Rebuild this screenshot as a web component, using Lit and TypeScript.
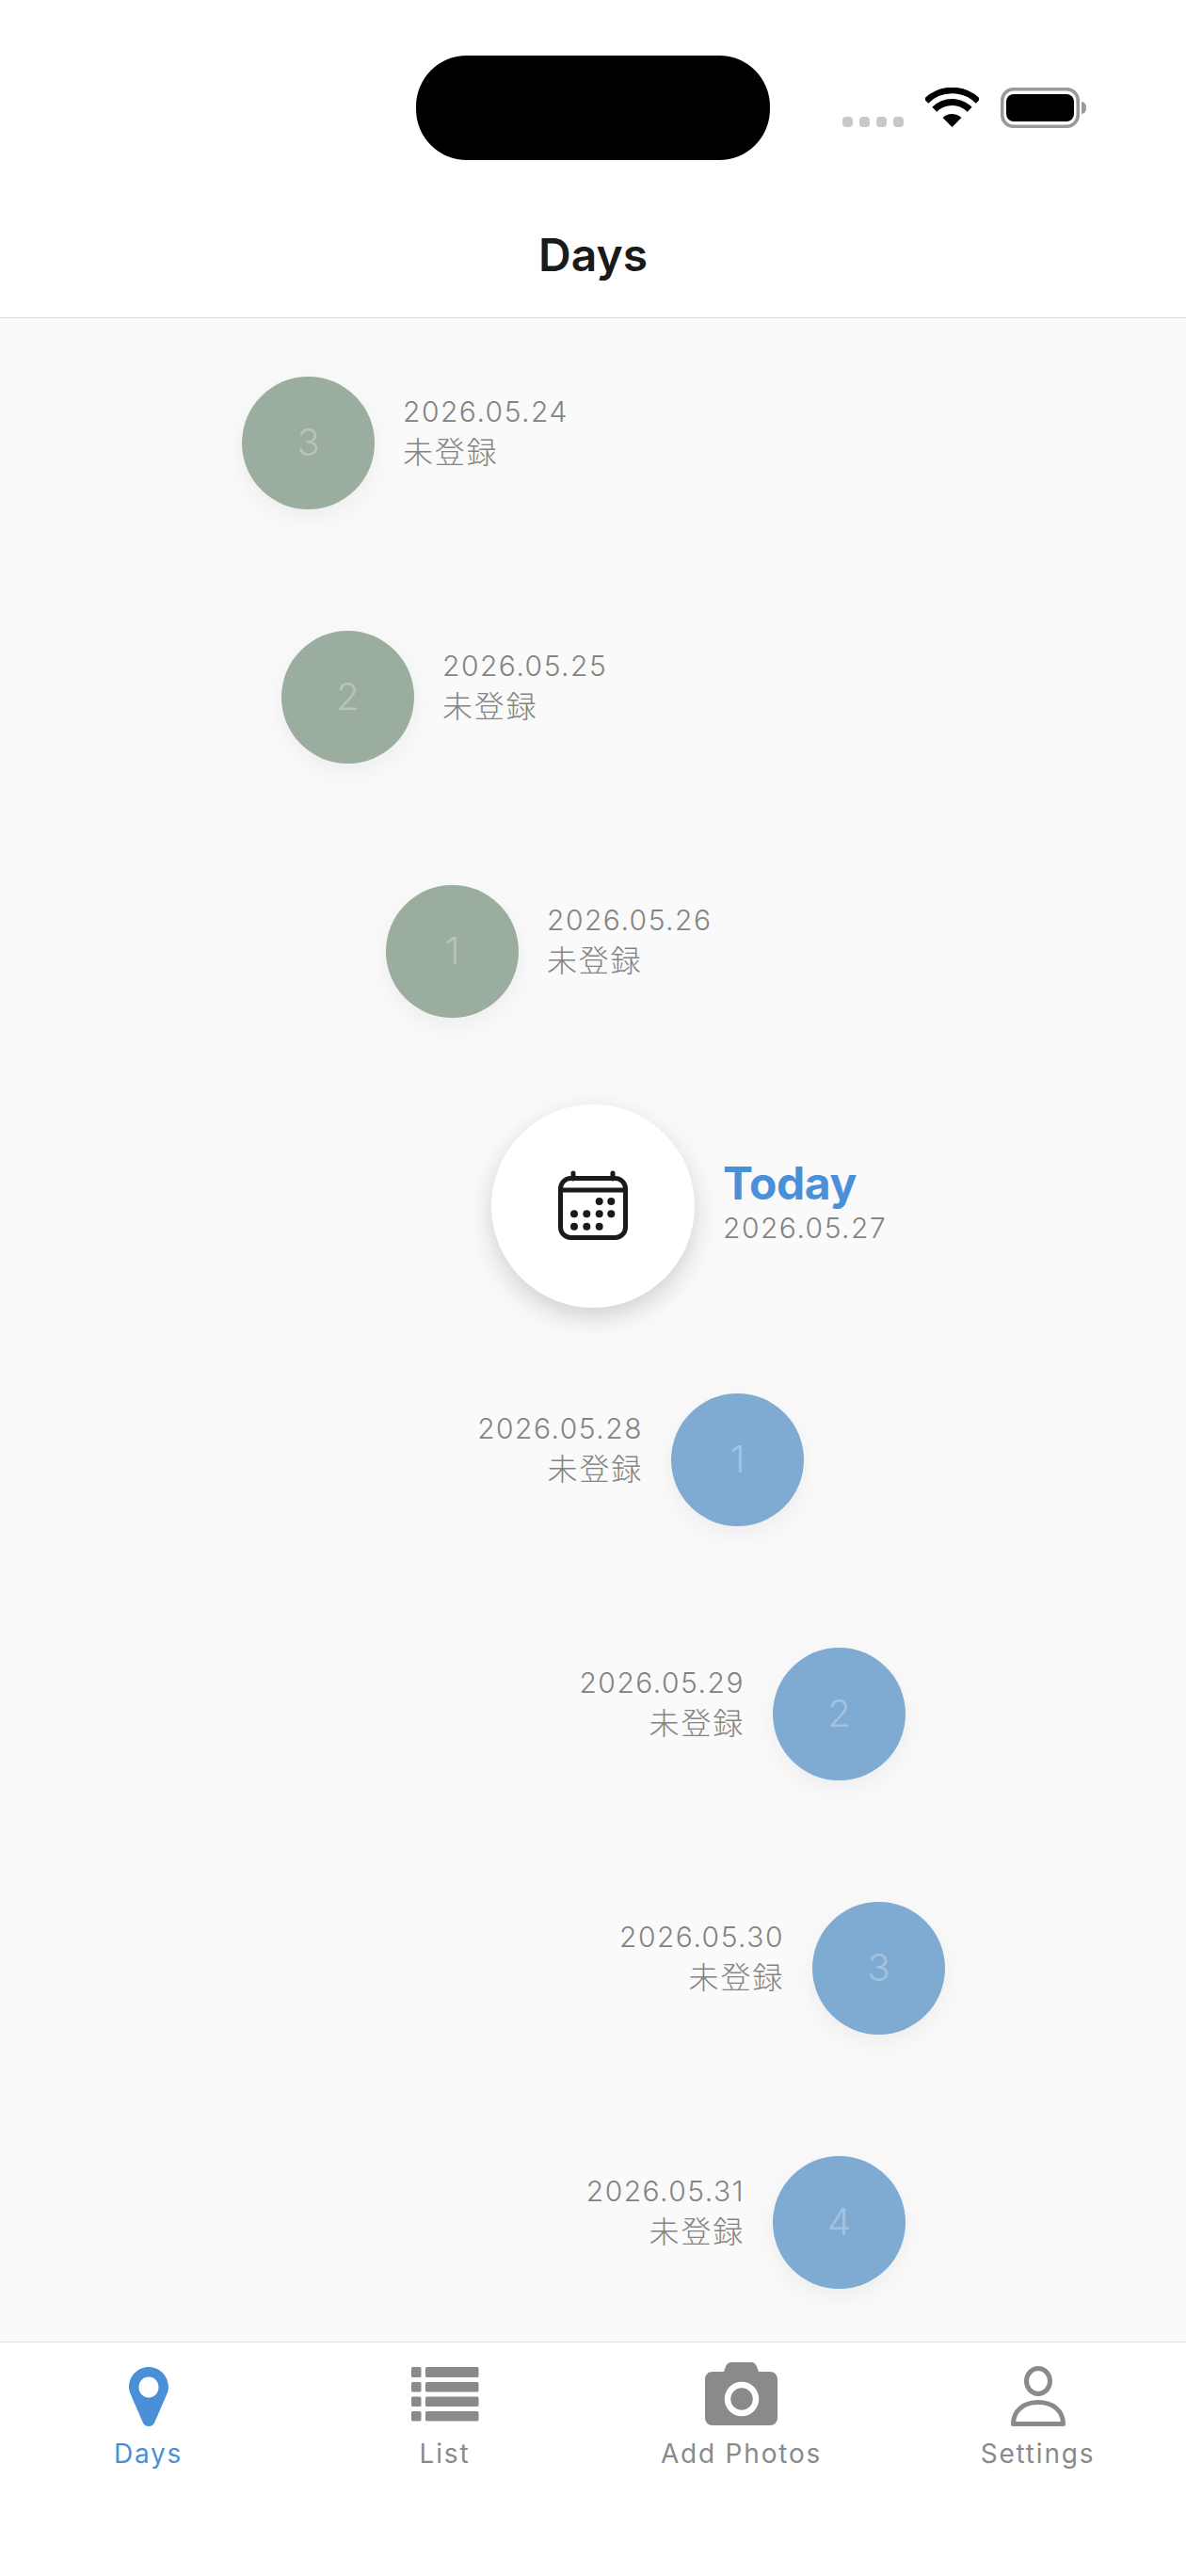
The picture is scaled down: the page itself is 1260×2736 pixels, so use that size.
import { LitElement, html, css, svg } from "lit";
import { customElement } from "lit/decorators.js";

type Day = { date: string; count: number; side: "past" | "future"; inset: number };

// inset = distance of the circle from the screen edge on its own side
const before: Day[] = [
  { date: "2026.05.24", count: 3, side: "past", inset: 257 },
  { date: "2026.05.25", count: 2, side: "past", inset: 299 },
  { date: "2026.05.26", count: 1, side: "past", inset: 410 },
];
const after: Day[] = [
  { date: "2026.05.28", count: 1, side: "future", inset: 406 },
  { date: "2026.05.29", count: 2, side: "future", inset: 298 },
  { date: "2026.05.30", count: 3, side: "future", inset: 256 },
  { date: "2026.05.31", count: 4, side: "future", inset: 298 },
];

const pinIcon = svg`<path fill-rule="evenodd" d="M40 6C28.400 6 19 15.600 19 27.500c0 3 .8 5.800 2.200 8.600L33.600 64.500c1.200 3 3.400 4.500 6.400 4.500s5.200-1.500 6.400-4.500L58.800 36.100c1.400-2.800 2.200-5.600 2.200-8.600C61 15.600 51.600 6 40 6zm0 10.500c5.800 0 10.500 4.900 10.500 11s-4.700 11-10.500 11-10.500-4.900-10.500-11 4.700-11 10.500-11z"/>`;

const listIcon = svg`
  <rect x="4" y="6" width="10.500" height="11" rx="1.500"/><rect x="19" y="6" width="56.500" height="11" rx="1.500"/>
  <rect x="4" y="22" width="10.500" height="10.500" rx="1.500"/><rect x="19" y="22" width="56.500" height="10.500" rx="1.500"/>
  <rect x="4" y="37.500" width="10.500" height="10.500" rx="1.500"/><rect x="19" y="37.500" width="56.500" height="10.500" rx="1.500"/>
  <rect x="4" y="53" width="10.500" height="10.500" rx="1.500"/><rect x="19" y="53" width="56.500" height="10.500" rx="1.500"/>`;

const cameraIcon = svg`
  <path d="M9 11h12l2-5.500C24.200 2.500 26 1 29 1h21c3 0 4.800 1.500 6 4.500L58 11h12c4.500 0 8 3.500 8 8v41c0 4.500-3.500 8-8 8H9c-4.500 0-8-3.500-8-8V19c0-4.500 3.500-8 8-8z"/>
  <circle cx="40" cy="40" r="15" fill="none" stroke="#fff" stroke-width="6.500"/>`;

const personIcon = svg`
  <ellipse cx="40" cy="21" rx="12.500" ry="13.500" fill="none" stroke="currentColor" stroke-width="5"/>
  <path d="M13.500 66.500C13.500 52 25 43.500 40 43.500S66.500 52 66.500 66.500z" fill="none" stroke="currentColor" stroke-width="5" stroke-linejoin="round"/>`;

const tabs = [
  { label: "Days", icon: pinIcon, active: true },
  { label: "List", icon: listIcon, active: false },
  { label: "Add Photos", icon: cameraIcon, active: false },
  { label: "Settings", icon: personIcon, active: false },
];

@customElement("app-root")
export class AppRoot extends LitElement {
  static styles = css`
    :host {
      display: flex;
      flex-direction: column;
      height: 2736px;
      background: #fff;
      font-family: Inter, "Noto Sans CJK JP", sans-serif;
      overflow: hidden;
    }

    .top {
      height: 337px;
      flex: none;
      background: #fff;
      border-bottom: 1px solid #e0e0e0;
    }

    .status {
      display: grid;
      grid-template-columns: 442px 376px 1fr;
      padding-top: 59px;
    }

    .island {
      grid-column: 2;
      height: 111px;
      border-radius: 54px;
      background: #000;
    }

    .indicators {
      display: flex;
      align-items: flex-start;
      padding: 34px 0 0 77px;
    }

    .cell-dots {
      display: flex;
      gap: 7px;
      margin: 31px 23px 0 0;
    }

    .cell-dots span {
      width: 11px;
      height: 11px;
      border-radius: 4px;
      background: #c8c8c8;
    }

    .wifi {
      display: block;
      margin-right: 23px;
    }

    .battery {
      display: block;
    }

    .title {
      margin: 71px 0 0;
      font-size: 48px;
      line-height: 60px;
      font-weight: 600;
      text-align: center;
      color: #1a1a1a;
    }

    .timeline {
      flex: 1;
      min-height: 0;
      overflow: hidden;
      background: #fafafa;
    }

    .rows {
      display: grid;
      grid-auto-rows: 270px;
      margin-top: -2.500px;
    }

    .row {
      display: flex;
      align-items: center;
      gap: 30px;
    }

    .row.future {
      justify-content: flex-end;
    }

    .circle {
      flex: none;
      width: 141px;
      height: 141px;
      border-radius: 50%;
      display: flex;
      align-items: center;
      justify-content: center;
      font-size: 40px;
      font-weight: 300;
      padding-bottom: 2px;
      box-sizing: border-box;
      color: rgba(255, 255, 255, 0.3);
      box-shadow: 0 8px 28px rgba(0, 0, 0, 0.06);
    }

    .past .circle {
      background: #9aad9e;
    }

    .future .circle {
      background: #7fabd3;
    }

    .meta {
      display: flex;
      flex-direction: column;
      color: #848484;
      margin-top: -20px;
    }

    .future .meta {
      align-items: flex-end;
    }

    .date {
      font-size: 30px;
      line-height: 36px;
      font-weight: 300;
      letter-spacing: 1.500px;
    }

    .state {
      font-size: 32px;
      line-height: 44px;
      font-weight: 300;
      letter-spacing: 1.800px;
      margin-top: 4px;
    }

    .today-circle {
      flex: none;
      width: 216px;
      height: 216px;
      border-radius: 50%;
      background: #fff;
      display: flex;
      align-items: center;
      justify-content: center;
      box-shadow: 0 10px 28px rgba(0, 0, 0, 0.17);
    }

    .today-meta {
      display: flex;
      flex-direction: column;
      margin-top: -12px;
    }

    .today-label {
      font-size: 48px;
      line-height: 58px;
      font-weight: 700;
      letter-spacing: -0.400px;
      color: #4a90d9;
    }

    .today-date {
      font-size: 30px;
      line-height: 36px;
      font-weight: 300;
      letter-spacing: 1.500px;
      color: #848484;
    }

    .tabbar {
      flex: none;
      height: 248px;
      background: #fff;
      border-top: 1px solid #e0e0e0;
      display: grid;
      grid-template-columns: repeat(4, 315px);
    }

    .tab {
      display: flex;
      flex-direction: column;
      align-items: center;
      padding-top: 20px;
      color: #8a8a8a;
    }

    .tab.active {
      color: #4a90d9;
    }

    .tab svg {
      display: block;
      fill: currentColor;
    }

    .tab span {
      margin-top: 10px;
      font-size: 28px;
      line-height: 36px;
      letter-spacing: 1.800px;
    }
  `;

  private renderDay(d: Day) {
    const inset = d.side === "past" ? `padding-left:${d.inset}px` : `padding-right:${d.inset}px`;
    const circle = html`<div class="circle">${d.count}</div>`;
    const meta = html`<div class="meta">
      <div class="date">${d.date}</div>
      <div class="state">未登録</div>
    </div>`;
    return html`<div class="row ${d.side}" style=${inset}>
      ${d.side === "past" ? html`${circle}${meta}` : html`${meta}${circle}`}
    </div>`;
  }

  private renderCalendar() {
    const dots = [
      [56.7, 45], [69.3, 45],
      [30, 58.3], [43.3, 58.3], [56.7, 58.3], [69.3, 58.3],
      [30, 71.7], [43.3, 71.7], [56.7, 71.7],
    ];
    return html`<svg width="100" height="100" viewBox="0 0 100 100" fill="none" stroke="#1a1a1a" stroke-width="5">
      <rect x="15.500" y="20.500" width="69" height="63" rx="11" />
      <path d="M15 33h70" />
      <path d="M29 15v6M71 15v6" stroke-linecap="round" />
      ${dots.map(([x, y]) => svg`<circle cx=${x} cy=${y} r="4" fill="#1a1a1a" stroke="none" />`)}
    </svg>`;
  }

  render() {
    return html`
      <header class="top">
        <div class="status">
          <div class="island"></div>
          <div class="indicators">
            <div class="cell-dots"><span></span><span></span><span></span><span></span></div>
            <svg class="wifi" width="57" height="42" viewBox="0 0 57 42" fill="none" stroke="#000">
              <path stroke-width="6.500" d="M.9 14.400A39 39 0 0 1 56.100 14.400" />
              <path stroke-width="7" d="M9.800 23.300A26.500 26.500 0 0 1 47.200 23.300" />
              <path fill="#000" stroke="none" d="M28.500 42L18.600 32.100A14 14 0 0 1 38.400 32.100Z" />
            </svg>
            <svg class="battery" width="93" height="43" viewBox="0 0 93 43">
              <rect x="1.750" y="1.750" width="80.500" height="39.500" rx="12" fill="none" stroke="#999" stroke-width="3.500" />
              <rect x="6" y="7" width="72" height="29" rx="8" fill="#000" />
              <path d="M86 15c3.500.5 5 3 5 6.500s-1.500 6-5 6.500z" fill="#999" />
            </svg>
          </div>
        </div>
        <h1 class="title">Days</h1>
      </header>
      <main class="timeline">
        <div class="rows">
          ${before.map((d) => this.renderDay(d))}
          <div class="row" style="padding-left:522px">
            <div class="today-circle">${this.renderCalendar()}</div>
            <div class="today-meta">
              <div class="today-label">Today</div>
              <div class="today-date">2026.05.27</div>
            </div>
          </div>
          ${after.map((d) => this.renderDay(d))}
        </div>
      </main>
      <nav class="tabbar">
        ${tabs.map(
          (t) => html`<div class="tab ${t.active ? "active" : ""}">
            <svg width="80" height="70" viewBox="0 0 80 70">${t.icon}</svg>
            <span>${t.label}</span>
          </div>`
        )}
      </nav>
    `;
  }
}

declare global {
  interface HTMLElementTagNameMap {
    "app-root": AppRoot;
  }
}
